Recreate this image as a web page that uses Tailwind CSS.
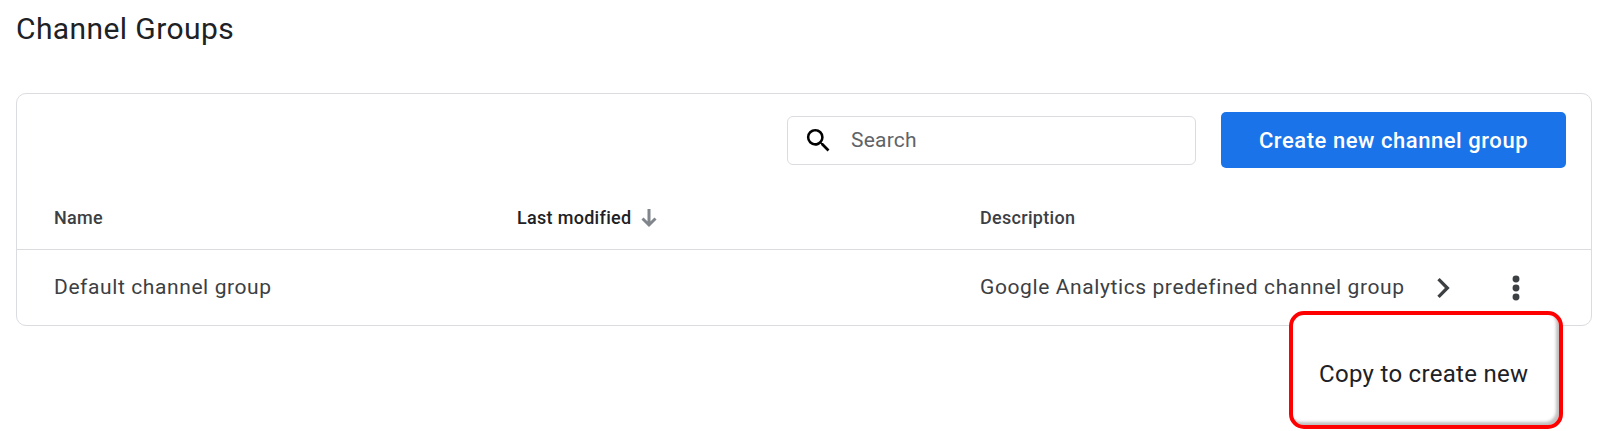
<!DOCTYPE html>
<html lang="en">
  <head>
    <meta charset="UTF-8" />
    <meta name="viewport" content="width=device-width, initial-scale=1.0" />
    <title>Channel Groups</title>
    <script src="https://cdn.jsdelivr.net/npm/@tailwindcss/browser@4"></script>
  </head>
  <body class="bg-white font-['Roboto',sans-serif] h-[431px] overflow-hidden">
    <div class="relative pl-[16px] pr-[8px]">
      <h1 class="h-[93px] pt-[11px] text-[30px] leading-[36px] tracking-[0.4px] text-[#202124]">Channel Groups</h1>

      <div class="border border-[#dadce0] rounded-[10px] h-[233px]">
        <div class="flex justify-end items-center h-[92px] pr-[25px]">
          <div class="flex items-center w-[409px] h-[49px] border border-[#dadce0] rounded-[6px]">
            <svg class="ml-[15px] w-[31px] h-[31px]" viewBox="0 0 24 24" fill="#000">
              <path d="M15.5 14h-.79l-.28-.27A6.47 6.47 0 0 0 16 9.5 6.5 6.5 0 1 0 9.5 16c1.61 0 3.09-.59 4.23-1.57l.27.28v.79l5 4.99L20.49 19l-4.99-5zm-6 0C7.01 14 5 11.99 5 9.5S7.01 5 9.5 5 14 7.01 14 9.5 11.99 14 9.5 14z" />
            </svg>
            <span class="ml-[17px] pt-[2px] text-[21px] tracking-[0.2px] text-[#5f6368]">Search</span>
          </div>
          <button class="ml-[25px] w-[345px] h-[56px] bg-[#1a73e8] rounded-[5px] text-white text-[22px] font-medium tracking-[0.55px]">Create new channel group</button>
        </div>

        <div class="grid grid-cols-[463px_463px_1fr] items-center h-[64px] pl-[37px] border-b border-[#dadce0] text-[18px] tracking-[0.3px] font-medium text-[#3c4043]">
          <div>Name</div>
          <div class="flex items-center text-[#202124]">
            Last modified
            <svg class="ml-[10px] w-[16px] h-[20px]" viewBox="0 0 16 20" fill="none" stroke="#80868b" stroke-width="3">
              <path d="M8 1v16M1.500 10.500 8 17l6.500-6.500" />
            </svg>
          </div>
          <div>Description</div>
        </div>

        <div class="grid grid-cols-[463px_463px_1fr] items-center h-[75px] pl-[37px] text-[21px] tracking-[0.6px] text-[#3c4043]">
          <div>Default channel group</div>
          <div></div>
          <div class="flex items-center">
            <span class="whitespace-nowrap">Google Analytics predefined channel group</span>
            <svg class="ml-[18px] w-[40px] h-[40px] shrink-0" viewBox="0 0 24 24" fill="#3c4043">
              <path d="M8.59 16.59 13.17 12 8.59 7.41 10 6l6 6-6 6z" />
            </svg>
            <svg class="ml-[35px] w-[36px] h-[36px] shrink-0" viewBox="0 0 24 24" fill="#3c4043">
              <circle cx="12" cy="6" r="2.3" />
              <circle cx="12" cy="12" r="2.3" />
              <circle cx="12" cy="18" r="2.3" />
            </svg>
          </div>
        </div>
      </div>

      <div class="absolute left-[1289px] top-[311px] w-[274px] h-[118px] border-[4px] border-[#ff0000] rounded-[15px] bg-white shadow-[inset_-3px_-3px_3px_rgba(0,0,0,0.25)] flex items-center pl-[26px] pt-[8px] text-[24px] tracking-[0.3px] text-[#202124]">
        Copy to create new
      </div>
    </div>
  </body>
</html>
